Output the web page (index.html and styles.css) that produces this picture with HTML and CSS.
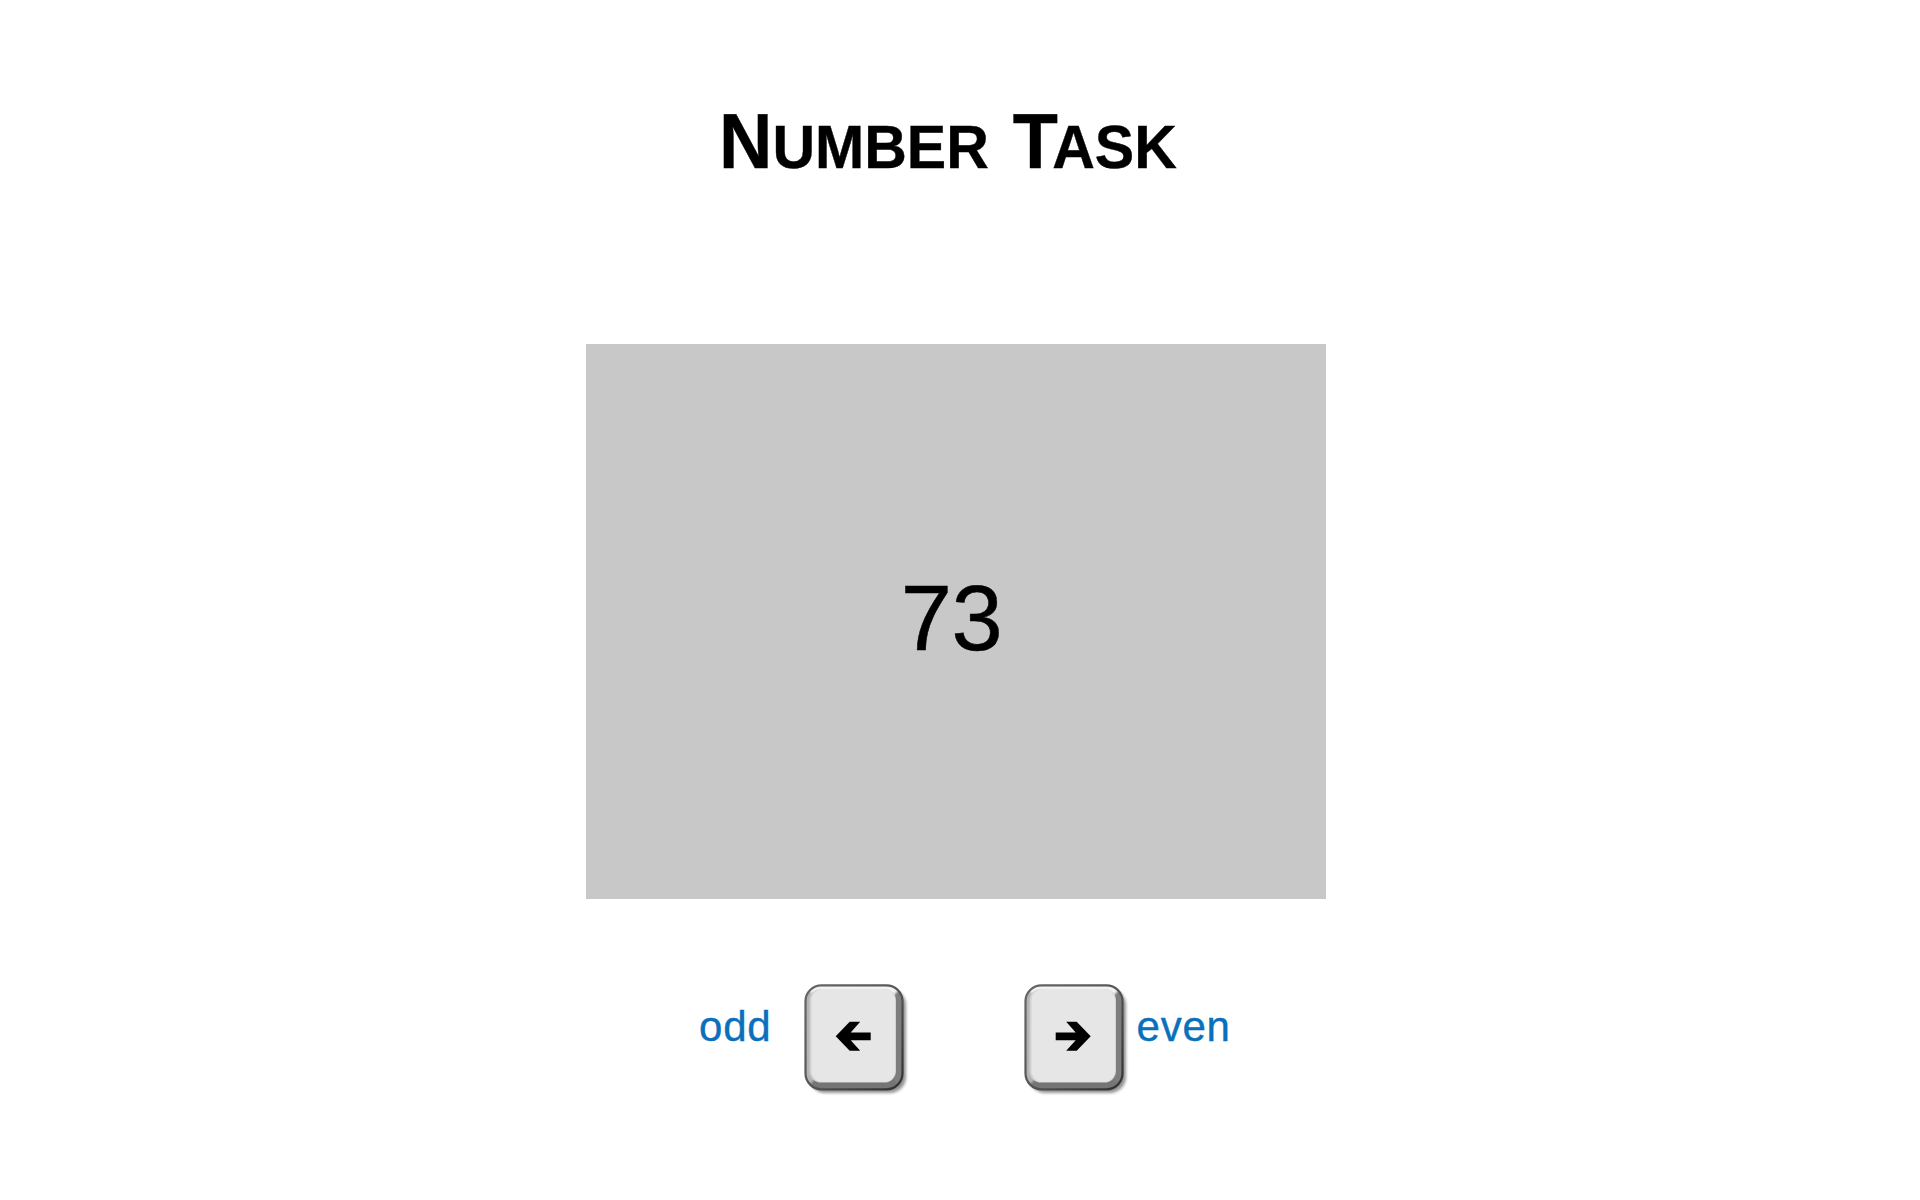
FILE: index.html
```html
<!DOCTYPE html>
<html lang="en">
<head>
<meta charset="utf-8">
<title>Number Task</title>
<link rel="stylesheet" href="styles.css">
</head>
<body>
<main class="task">
  <h1 class="title">N<span class="small">UMBER</span> <span class="cap-t">T</span><span class="small">ASK</span></h1>
  <section class="stimulus"><span class="number">73</span></section>
  <div class="responses">
    <span class="label label-odd">odd</span>
    <svg class="key" viewBox="0 0 110 116" role="img" aria-label="Left arrow key">
      <defs>
        <linearGradient id="edge" x1="0" y1="0" x2="1" y2="1">
          <stop offset="0" stop-color="#666"/><stop offset=".5" stop-color="#555"/><stop offset="1" stop-color="#303030"/>
        </linearGradient>
        <filter id="shade" x="-10%" y="-10%" width="125%" height="125%"><feGaussianBlur stdDeviation="1.8"/></filter>
        <filter id="soft"><feGaussianBlur stdDeviation="1"/></filter>
        <clipPath id="outline"><rect x="1.500" y="1.300" width="97" height="104" rx="16"/></clipPath>
        <g id="cap">
          <rect x="5" y="5" width="97" height="104" rx="16" fill="#000" opacity=".42" filter="url(#shade)"/>
          <g clip-path="url(#outline)">
            <rect x="0" y="0" width="100" height="107" fill="#b4b4b4"/>
            <g filter="url(#soft)">
              <path d="M-5 -5H104L88 14H12Z" fill="#f2f2f2"/>
              <path d="M104 -5V112L84 92V18Z" fill="#7d7d7d"/>
              <path d="M-5 112H104L84 90H16Z" fill="#747474"/>
            </g>
          </g>
          <rect x="1.500" y="1.300" width="97" height="104" rx="16" fill="none" stroke="url(#edge)" stroke-width="2.200"/>
          <rect x="5.500" y="5" width="86.500" height="93.500" rx="11.500" fill="#d2d2d2"/>
          <rect x="7.500" y="5" width="83.500" height="93" rx="11" fill="#e6e6e6"/>
        </g>
        <path id="arrow" d="M0 14.500L14 0H24.500L15 10.700H35V18.500H15L24.500 29H14Z"/>
      </defs>
      <use href="#cap"/>
      <use href="#arrow" x="31.700" y="37.700"/>
    </svg>
    <svg class="key key-right" viewBox="0 0 110 116" role="img" aria-label="Right arrow key">
      <use href="#cap"/>
      <use href="#arrow" transform="translate(66.700 37.700) scale(-1 1)"/>
    </svg>
    <span class="label label-even">even</span>
  </div>
</main>
</body>
</html>
```
FILE: styles.css
```css
body {
  margin: 0;
  background: #fff;
  color: #000;
  font-family: "Liberation Sans", Arial, sans-serif;
}

.task {
  box-sizing: border-box;
  height: 1200px;
  padding-top: 96px;
  overflow: hidden;
}

.title {
  width: max-content;
  height: 90px;
  margin: 0 0 158px 719px;
  font-size: 77px;
  font-weight: 700;
  line-height: 90px;
  white-space: nowrap;
  transform: scaleX(.96);
  transform-origin: left;
  -webkit-text-stroke: .4px #000;
}

.small {
  font-size: 61.500px;
}

.cap-t {
  margin-left: 3.500px;
  letter-spacing: -6px;
}

.stimulus {
  display: flex;
  align-items: center;
  justify-content: center;
  width: 740px;
  height: 555px;
  margin-left: 586px;
  background: #c8c8c8;
}

.number {
  padding: 0 9px 6px 0;
  font-size: 92px;
  line-height: 107px;
  letter-spacing: -.5px;
  -webkit-text-stroke: .5px #000;
}

.responses {
  display: flex;
  align-items: flex-start;
  margin: 85px 0 0 699px;
}

.label {
  padding-top: 19px;
  color: #0a70bc;
  font-size: 42px;
  line-height: 48px;
  letter-spacing: .8px;
  -webkit-text-stroke: .4px #0a70bc;
}

.label-odd {
  width: 105px;
}

.label-even {
  margin-left: 2.500px;
}

.key {
  width: 110px;
  height: 116px;
}

.key-right {
  margin-left: 110px;
}
```
